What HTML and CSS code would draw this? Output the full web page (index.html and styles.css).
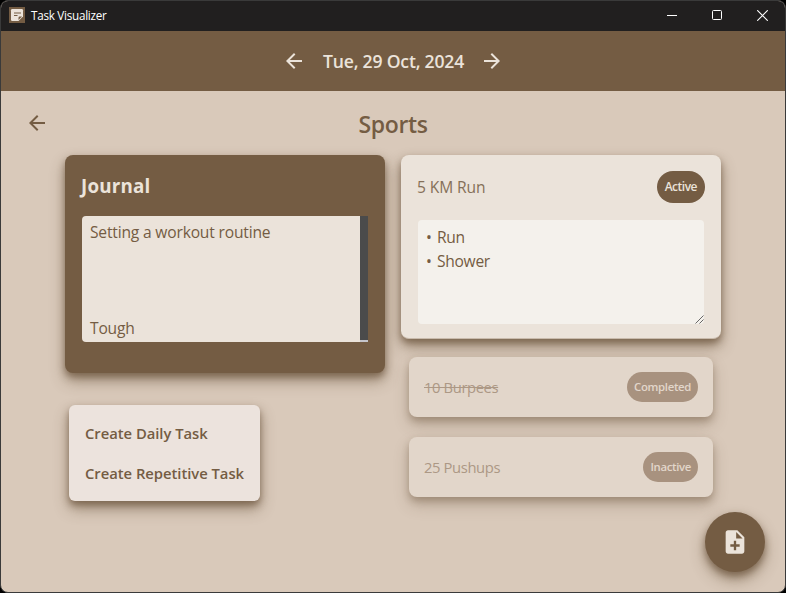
FILE: index.html
```html
<!DOCTYPE html>
<html lang="en">
<head>
<meta charset="utf-8">
<title>Task Visualizer</title>
<link rel="stylesheet" href="styles.css">
</head>
<body>
<div class="window">
  <header class="titlebar">
    <svg class="app-icon" viewBox="0 0 16 16"><rect width="16" height="16" fill="#745c43"/><path d="M3.200 2h9.600Q14 2 14 3.200V9.500L9.500 14H3.200Q2 14 2 12.800V3.200Q2 2 3.200 2z" fill="#ebe3da"/><path d="M5 6h7M5 8.500h3.500" stroke="#745c43" stroke-width="1.200"/><path d="M9.500 13V10.700Q9.500 9.500 10.700 9.500H13z" fill="#745c43"/></svg>
    <span class="app-name">Task Visualizer</span>
    <div class="controls">
      <svg viewBox="0 0 10 10"><path d="M0 5.500h10"/></svg>
      <svg viewBox="0 0 10 10"><rect x=".5" y=".5" width="9" height="9" rx="1"/></svg>
      <svg viewBox="0 0 10 10"><path d="M.2.200l9.600 9.600M9.800.200L.2 9.800"/></svg>
    </div>
  </header>
  <nav class="datebar">
    <svg class="arrow" viewBox="0 0 24 24"><path d="M20 11H7.830l5.590-5.590L12 4l-8 8 8 8 1.410-1.410L7.830 13H20v-2z"/></svg>
    <span class="date">Tue, 29 Oct, 2024</span>
    <svg class="arrow" viewBox="0 0 24 24"><path d="M12 4l-1.410 1.410L16.170 11H4v2h12.170l-5.580 5.590L12 20l8-8z"/></svg>
  </nav>
  <main>
    <div class="heading">
      <svg class="arrow" viewBox="0 0 24 24"><path d="M20 11H7.830l5.590-5.590L12 4l-8 8 8 8 1.410-1.410L7.830 13H20v-2z"/></svg>
      <h1>Sports</h1>
    </div>
    <div class="columns">
      <div class="column">
        <section class="journal">
          <h2>Journal</h2>
          <div class="entry">
            <div class="text">Setting a workout routine



Tough</div>
            <div class="scroll"></div>
          </div>
        </section>
        <div class="menu">
          <div class="menu-item">Create Daily Task</div>
          <div class="menu-item">Create Repetitive Task</div>
        </div>
      </div>
      <div class="column">
        <section class="task open">
          <div class="row"><span class="name">5 KM Run</span><span class="pill">Active</span></div>
          <div class="notes"><span class="bullet">•</span>Run
<span class="bullet">•</span>Shower<svg class="grip" viewBox="0 0 9 9"><path d="M.5 8.500l8-8M4.500 8.500l4-4"/></svg></div>
        </section>
        <section class="task muted">
          <div class="row"><span class="name done">10 Burpees</span><span class="pill">Completed</span></div>
        </section>
        <section class="task muted">
          <div class="row"><span class="name">25 Pushups</span><span class="pill">Inactive</span></div>
        </section>
      </div>
    </div>
    <div class="fab"><svg viewBox="0 0 24 24"><path d="M14 2H6c-1.100 0-2 .9-2 2v16c0 1.100.9 2 2 2h12c1.100 0 2-.9 2-2V8l-6-6zm2 14h-3v3h-2v-3H8v-2h3v-3h2v3h3v2zm-3-7V3.500L18.500 9H13z"/></svg></div>
  </main>
</div>
</body>
</html>
```
FILE: styles.css
```css
* { box-sizing: border-box; }

body {
  margin: 0;
  background: #000;
  font-family: "Open Sans", "Noto Sans", sans-serif;
  color: #745c43;
  --shadow: 0 8px 15px rgba(92, 68, 43, .45), 0 4px 7px rgba(92, 68, 43, .55);
}

.window {
  width: 786px;
  height: 593px;
  display: flex;
  flex-direction: column;
  border: 1px solid #3a3a3a;
  border-radius: 8px;
  overflow: hidden;
  background: #d9c9ba;
}

.titlebar {
  flex: 0 0 30px;
  display: flex;
  align-items: center;
  padding: 0 17px 0 8px;
  background: #211f1f;
  color: #fff;
}

.app-icon { width: 16px; height: 16px; margin-top: -2px; }
.app-name { margin: -2px 0 0 6px; font-size: 11.7px; letter-spacing: -0.27px; }

.controls { margin: -1px 0 0 auto; display: flex; gap: 35px; }
.controls svg { width: 10px; height: 10px; fill: none; stroke: #fff; stroke-width: 1; }
.controls svg:last-child { width: 11px; height: 11px; }

.datebar {
  flex: 0 0 60px;
  display: flex;
  align-items: center;
  justify-content: center;
  gap: 17px;
  background: #745c43;
  color: #ebe3da;
}

.date { font-size: 17.6px; font-weight: 600; letter-spacing: -0.2px; width: 140px; white-space: nowrap; }
.arrow { width: 24px; height: 24px; fill: currentColor; flex: none; }

main { flex: 1; position: relative; padding: 16px 64px 0; }

.heading {
  height: 48px;
  margin-left: -40px;
  display: grid;
  grid-template-columns: 40px 656px;
}
.heading .arrow { margin-top: 4px; }

h1 {
  margin: 0;
  text-align: center;
  font-size: 23px;
  line-height: 34px;
  font-weight: 600;
  letter-spacing: -0.35px;
}

.columns { display: grid; grid-template-columns: 320px 320px; gap: 16px; }

.journal {
  height: 218px;
  padding: 16px;
  border-radius: 8px;
  background: #745c43;
  box-shadow: var(--shadow);
}

h2 { margin: 0; color: #ebe3da; font-size: 18.8px; line-height: 30px; font-weight: 700; letter-spacing: 0.2px; }

.entry {
  display: flex;
  height: 126px;
  margin: 15px 1px 0;
  border-radius: 4px 0 0 4px;
  overflow: hidden;
  background: #ebe3da;
}
.text { flex: 1; padding: 4px 8px; font-size: 15.6px; line-height: 24px; letter-spacing: -0.18px; white-space: pre; }
.scroll { width: 8px; background: #4b4b4b; border-bottom: 2px solid #c5c5cb; }

.menu {
  width: 191px;
  height: 96px;
  margin: 32px 0 0 4px;
  padding: 8px 16px;
  border-radius: 6px;
  background: #ece3dd;
  box-shadow: var(--shadow);
}
.menu-item { font-size: 14.8px; font-weight: 600; line-height: 40px; letter-spacing: -0.03px; white-space: nowrap; }

.task {
  border-radius: 8px;
  background: #ebe3da;
  box-shadow: var(--shadow);
}
.open { height: 184px; padding: 16px; margin-bottom: 18px; border-bottom: 1px solid #c9bbac; }
.row { display: flex; align-items: center; justify-content: space-between; }
.name { font-size: 15.6px; letter-spacing: -0.1px; opacity: .85; }
.pill {
  height: 32px;
  line-height: 32px;
  padding: 0 8px;
  border-radius: 16px;
  background: #745c43;
  color: #ebe3da;
  font-size: 12px;
  font-weight: 600;
  letter-spacing: -0.5px;
}

.notes {
  position: relative;
  height: 104px;
  margin: 17px 1px 0;
  padding: 5px 8px;
  border-radius: 4px;
  background: #f4f1ec;
  font-size: 15.6px;
  line-height: 24px;
  letter-spacing: -0.3px;
  white-space: pre;
}
.bullet { display: inline-block; width: 11px; }
.grip { position: absolute; right: 0; bottom: 0; width: 9px; height: 9px; fill: none; stroke: #444; stroke-width: .8; }

.muted {
  height: 60px;
  margin: 0 8px 20px;
  padding: 15px;
  background: #e2d6ca;
  --shadow: 0 8px 15px rgba(92, 68, 43, .25), 0 4px 7px rgba(92, 68, 43, .3);
}
.muted .name { font-size: 14.8px; letter-spacing: -0.4px; color: #ac9885; opacity: 1; }
.muted .pill { height: 30px; line-height: 30px; padding: 0 7px; background: #a8927f; color: #e2d6ca; font-size: 11.4px; letter-spacing: -0.35px; }
.done { text-decoration: line-through; }

.fab {
  position: absolute;
  right: 20px;
  bottom: 20px;
  width: 60px;
  height: 60px;
  border-radius: 50%;
  display: grid;
  place-items: center;
  background: #745c43;
  box-shadow: var(--shadow);
}
.fab svg { width: 28px; height: 28px; fill: #ebe3da; }
```
